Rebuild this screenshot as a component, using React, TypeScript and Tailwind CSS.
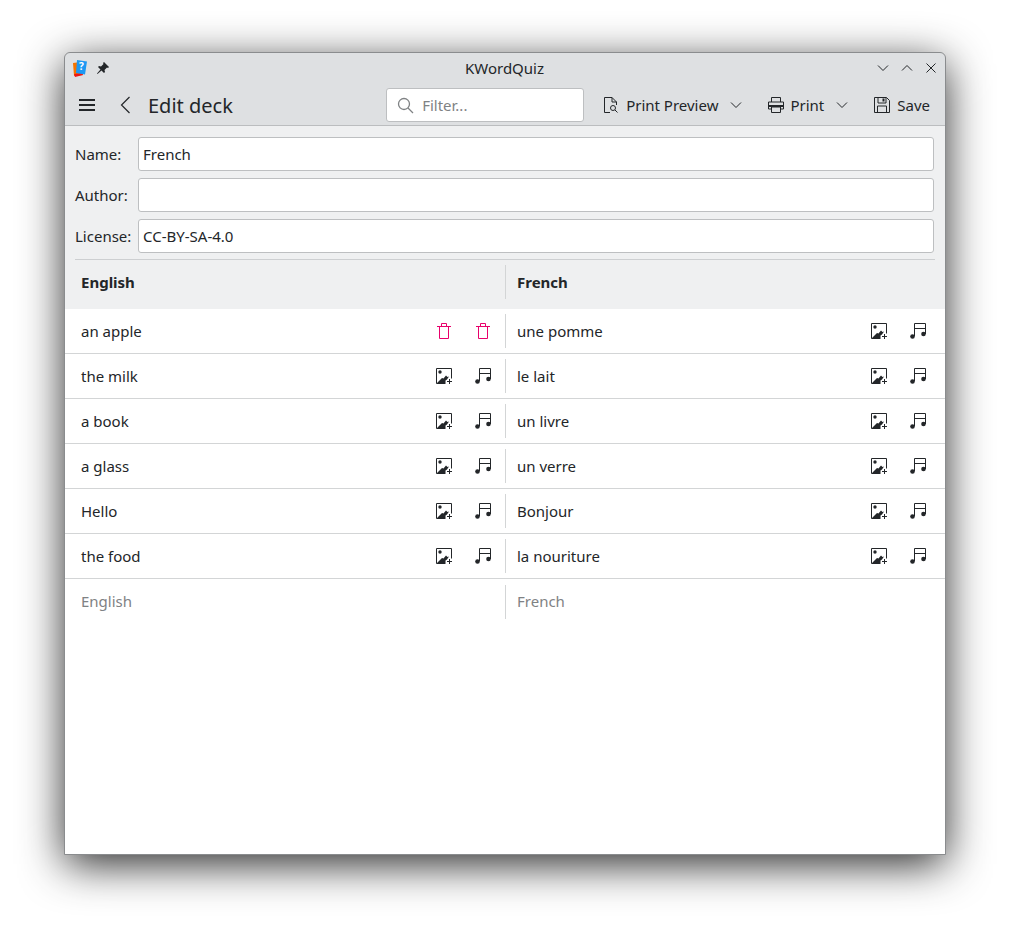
import React from 'react';

const font = { fontFamily: '"Noto Sans", sans-serif' };

function ImageAdd() {
  return (
    <svg width="16" height="16" viewBox="0 0 16 16" className="text-[#232629]">
      <path d="M.5 15.500V.5h15v10M.5 15.500h9" fill="none" stroke="currentColor" />
      <circle cx="4" cy="4" r="1.700" fill="currentColor" />
      <path d="M1 15l5-5 1.500.5L10 7.500 11.500 9l1.500-.5-2 3-1.500 1V15z" fill="currentColor" />
      <path d="M13.500 11v5M11 13.500h5" stroke="currentColor" fill="none" />
    </svg>
  );
}

function Note() {
  return (
    <svg width="16" height="16" viewBox="0 0 16 16" className="text-[#232629]">
      <path d="M4.500 13V.5h11V11M4.500 5.500h11" fill="none" stroke="currentColor" />
      <circle cx="2.500" cy="13.500" r="2.300" fill="currentColor" />
      <circle cx="13.500" cy="11" r="2.300" fill="currentColor" />
    </svg>
  );
}

function Trash() {
  return (
    <svg width="16" height="16" viewBox="0 0 16 16" className="text-[#e9006b]">
      <path d="M1 3.500h14M5.500 3V.5h5V3M3.500 4v11.500h9V4" fill="none" stroke="currentColor" />
    </svg>
  );
}

function Chevron({ className = '' }: { className?: string }) {
  return (
    <svg width="12" height="8" viewBox="0 0 12 8" className={className}>
      <path d="M1 1.500l5 5 5-5" fill="none" stroke="currentColor" />
    </svg>
  );
}

function Field({ label, value }: { label: string; value: string }) {
  return (
    <div className="flex items-center h-[34px]">
      <span className="w-[63px] text-[15px] text-[#232629]">{label}</span>
      <div className="flex-1 h-[34px] bg-white border border-[#bdbfc1] rounded-[3px] px-1 flex items-center text-[15px] text-[#232629]">
        {value}
      </div>
    </div>
  );
}

const rows = [
  ['an apple', 'une pomme'],
  ['the milk', 'le lait'],
  ['a book', 'un livre'],
  ['a glass', 'un verre'],
  ['Hello', 'Bonjour'],
  ['the food', 'la nouriture'],
];

export default function App() {
  return (
    <div className="w-[1010px] h-[931px] bg-white overflow-hidden pt-[53px] pl-[65px]" style={font}>
      <div className="w-[880px] h-[801px] flex flex-col bg-white rounded-t-[5px] outline outline-1 outline-[#8a8c8e] shadow-[0_10px_44px_rgba(0,0,0,0.85)]">
        {/* Title bar + toolbar */}
        <div className="h-[73px] bg-[#dee0e2] border-b border-[#bbbdbf] shrink-0 rounded-t-[5px]">
          <div className="h-[32px] flex items-center pl-[7px] pr-[8px] pb-[2px]">
            <div className="flex-1 flex items-center">
              <svg width="16" height="18" viewBox="0 0 16 18">
                <path d="M1 4l8-1 2 13-9 1z" fill="#f67400" />
                <path d="M2 15l1 3 8-2-1-2z" fill="#ed1515" />
                <path d="M5 1l10 1.500-2 13-9-1.500z" fill="#1d99f3" />
                <text x="9.500" y="11" fontSize="10" fontWeight="700" fill="#fff" textAnchor="middle">?</text>
              </svg>
              <svg width="14" height="14" viewBox="0 0 14 14" className="ml-[8px] text-[#232629]">
                <path d="M8 1l5 5-1 1-1-.5-2.500 2.500.5 2-1 1-2.500-2.500L1.500 13 1 12.500l3.500-4L2 6l1-1 2 .5L7.500 3 7 2z" fill="currentColor" />
              </svg>
            </div>
            <span className="text-[15px] text-[#232629]">KWordQuiz</span>
            <div className="flex-1 flex items-center justify-end gap-3 text-[#232629]">
              <Chevron />
              <Chevron className="rotate-180" />
              <svg width="12" height="12" viewBox="0 0 12 12">
                <path d="M1.500 1.500l9 9M10.500 1.500l-9 9" fill="none" stroke="currentColor" />
              </svg>
            </div>
          </div>
          <div className="h-[40px] flex items-center pl-[14px] pr-[15px] text-[#232629]">
            <svg width="16" height="14" viewBox="0 0 16 14">
              <path d="M0 2h16M0 7h16M0 12h16" stroke="currentColor" strokeWidth="2" />
            </svg>
            <svg width="12" height="18" viewBox="0 0 12 18" className="ml-[24px]">
              <path d="M10.500 1l-8 8 8 8" fill="none" stroke="currentColor" strokeWidth="1.200" />
            </svg>
            <span className="ml-[17px] mt-[1px] text-[20px]">Edit deck</span>
            <div className="ml-auto w-[198px] h-[34px] bg-white border border-[#bdbfc1] rounded-[3px] flex items-center pl-[10px] gap-[8px] text-[#7f8284]">
              <svg width="17" height="17" viewBox="0 0 17 17">
                <circle cx="7" cy="7" r="5.500" fill="none" stroke="currentColor" strokeWidth="1.300" />
                <path d="M11 11l5 5" stroke="currentColor" strokeWidth="1.300" />
              </svg>
              <span className="text-[15px]">Filter...</span>
            </div>
            <div className="ml-[19px] flex items-center gap-[7px] text-[15px]">
              <svg width="16" height="16" viewBox="0 0 16 16">
                <path d="M7 15.500H1.500V.5H9l4.500 4.500v3M9 .5V5h4.500" fill="none" stroke="currentColor" />
                <circle cx="10" cy="11" r="2.500" fill="none" stroke="currentColor" />
                <path d="M12 13l2.500 2.500" stroke="currentColor" />
              </svg>
              <span>Print Preview</span>
              <Chevron className="ml-[5px]" />
            </div>
            <div className="ml-[26px] flex items-center gap-[6px] text-[15px]">
              <svg width="16" height="16" viewBox="0 0 16 16">
                <path d="M3.500 5V.5h9V5M3.500 12H.5V5h15v7h-3M3.500 10h9v5.500h-9z" fill="none" stroke="currentColor" />
                <path d="M1 8h14v2H1z" fill="currentColor" />
              </svg>
              <span>Print</span>
              <Chevron className="ml-[6px]" />
            </div>
            <div className="ml-[26px] flex items-center gap-[7px] text-[15px]">
              <svg width="16" height="16" viewBox="0 0 16 16">
                <path d="M.5.5h12l3 3v12H.5zM4 .5V6h8V.5M3.500 15.500V9h9v6.500" fill="none" stroke="currentColor" />
                <path d="M8.500 1.500h2v3h-2z" fill="currentColor" />
              </svg>
              <span>Save</span>
            </div>
          </div>
        </div>

        {/* Deck details */}
        <div className="bg-[#eff0f1] shrink-0 pt-[11px] pl-[10px] pr-[11px] flex flex-col gap-[7px]">
          <Field label="Name:" value="French" />
          <Field label="Author:" value="" />
          <Field label="License:" value="CC-BY-SA-4.0" />
        </div>
        <div className="bg-[#eff0f1] shrink-0 pt-[6px]">
          <div className="mx-[10px] border-t border-[#cdcfd1]" />
          <div className="h-[49px] pt-[5px] flex items-start">
            <div className="w-[440px] h-[34px] flex items-center pl-4 text-[15px] font-bold text-[#232629]">English</div>
            <div className="w-px h-[34px] bg-[#d3d5d6]" />
            <div className="flex-1 h-[34px] flex items-center pl-[11px] text-[15px] font-bold text-[#232629]">French</div>
          </div>
        </div>

        {/* Cards */}
        <div className="flex-1 bg-white">
          {rows.map(([a, b], i) => (
            <div key={a} className="h-[45px] flex items-center border-b border-[#d3d5d6]">
              <div className="w-[440px] flex items-center pl-4 pr-[14px]">
                <span className="flex-1 text-[15px] text-[#232629]">{a}</span>
                <div className="flex items-center gap-[23px]">
                  {i === 0 ? <Trash /> : <ImageAdd />}
                  {i === 0 ? <Trash /> : <Note />}
                </div>
              </div>
              <div className="w-px h-[34px] bg-[#d3d5d6]" />
              <div className="flex-1 flex items-center pl-[11px] pr-[19px]">
                <span className="flex-1 text-[15px] text-[#232629]">{b}</span>
                <div className="flex items-center gap-[23px]">
                  <ImageAdd />
                  <Note />
                </div>
              </div>
            </div>
          ))}
          <div className="h-[45px] flex items-center">
            <div className="w-[440px] pl-4 text-[15px] text-[#7f8284]">English</div>
            <div className="w-px h-[34px] bg-[#d3d5d6]" />
            <div className="flex-1 pl-[11px] text-[15px] text-[#7f8284]">French</div>
          </div>
        </div>
      </div>
    </div>
  );
}
